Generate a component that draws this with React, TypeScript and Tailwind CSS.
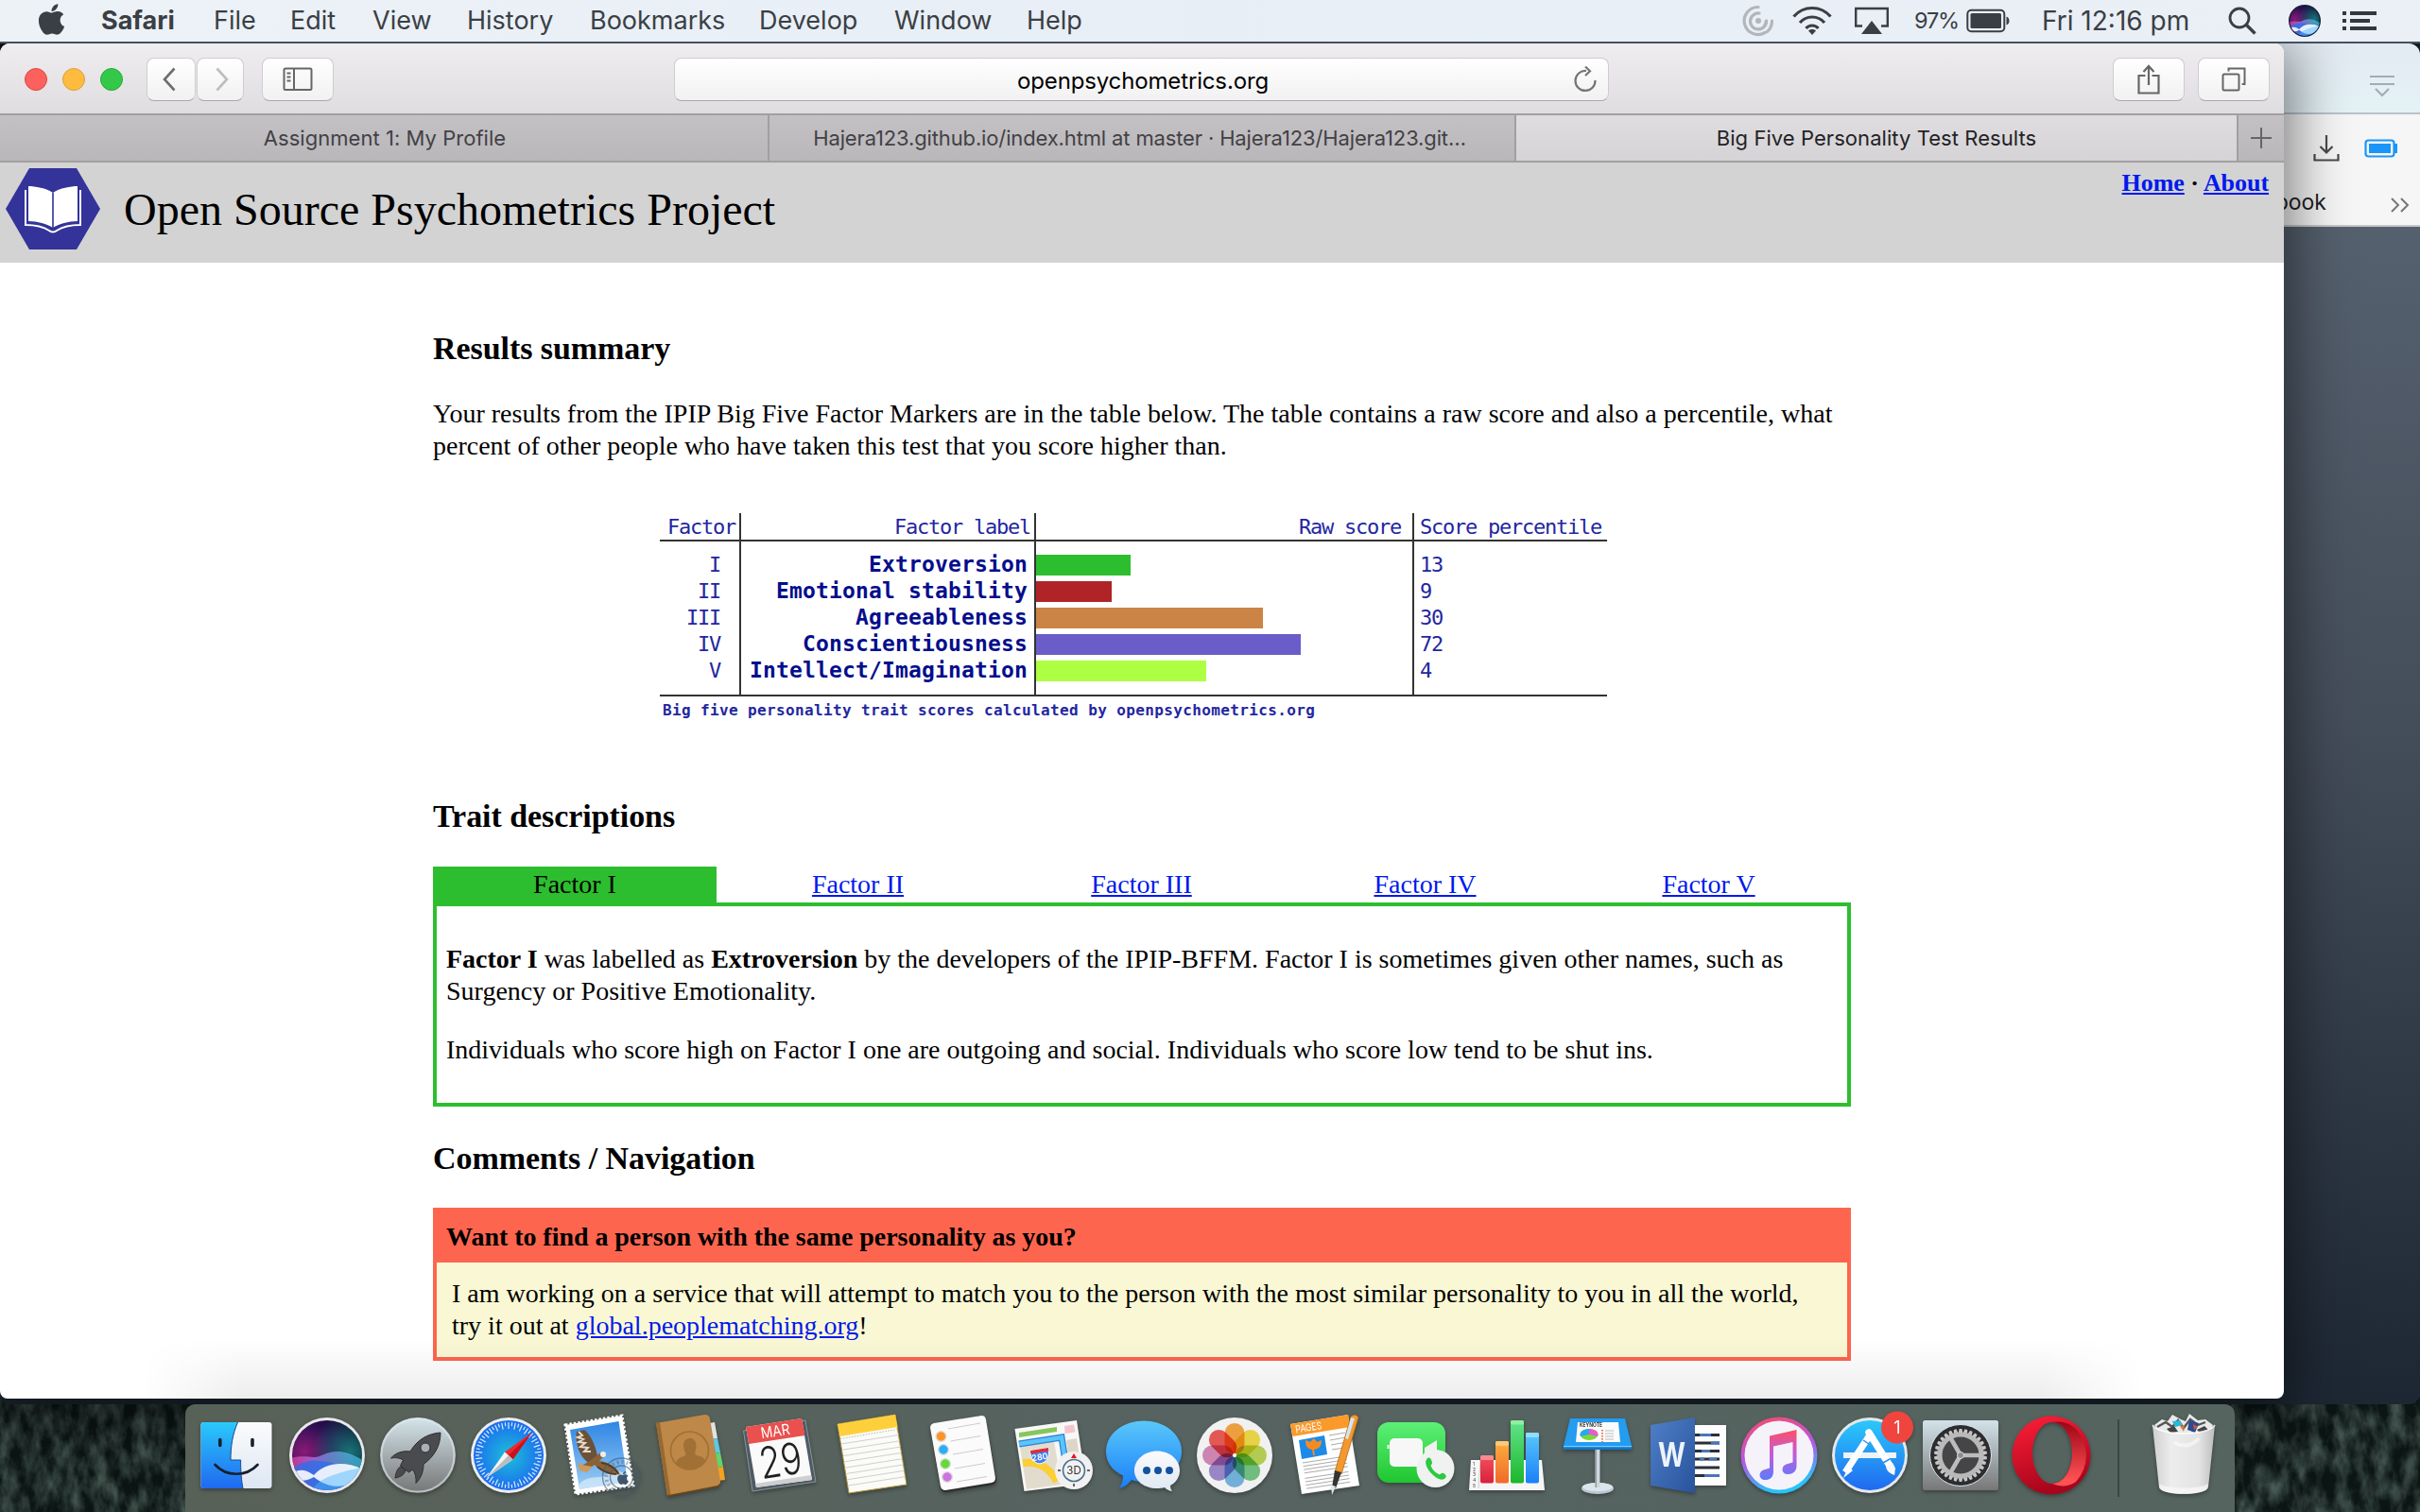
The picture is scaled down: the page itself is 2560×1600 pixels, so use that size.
import React from 'react';
import { FaApple } from 'react-icons/fa';

const SANS = "font-['Inter',sans-serif]";
const SERIF = "font-['Liberation_Serif',serif]";

const menuItems = [
  { label: 'Safari', cls: 'w-[119px] font-bold' },
  { label: 'File', cls: 'w-[81px]' },
  { label: 'Edit', cls: 'w-[87px]' },
  { label: 'View', cls: 'w-[100px]' },
  { label: 'History', cls: 'w-[130px]' },
  { label: 'Bookmarks', cls: 'w-[179px]' },
  { label: 'Develop', cls: 'w-[143px]' },
  { label: 'Window', cls: 'w-[140px]' },
  { label: 'Help', cls: '' },
];

function MenuBar() {
  return (
    <header className={`${SANS} relative z-30 flex h-[46px] items-center border-b-2 border-[#45525f] bg-gradient-to-r from-[#edf2f7] via-[#e7eef6] to-[#ebf0f6] text-[27px] leading-[46px] text-[#3a3f45]`}>
      <FaApple className="mb-1 ml-[36px] h-[37px] w-[37px]" />
      <nav className="ml-[34px] flex">
        {menuItems.map((m) => (
          <span key={m.label} className={m.cls}>{m.label}</span>
        ))}
      </nav>
      <div className="ml-auto flex h-[44px] items-center">
        <svg className="h-[34px] w-[34px]" viewBox="0 0 34 34" fill="none" stroke="#b0b6bc" strokeWidth="3.2" strokeLinecap="round">
          <path d="M17 2.500A14.500 14.500 0 1 0 24 29.500" />
          <path d="M18 9A8.500 8.500 0 1 0 25.500 17" />
          <circle cx="17" cy="17" r="3" fill="#b0b6bc" stroke="none" />
          <path d="M31.500 17c0 5-2 9-5 11.500M25.500 17c0 2-.8 4-2 5.500" />
        </svg>
        <svg className="ml-[19px] h-[32px] w-[42px]" viewBox="0 0 42 32" fill="none" stroke="#3a3f45" strokeWidth="3.2">
          <path d="M1.500 11.500C12-.500 30-.500 40.500 11.500" />
          <path d="M8 18C15 10 27 10 34 18" />
          <path d="M14.500 24C18 20 24 20 27.500 24" />
          <path d="M21 31l-4-4.500c2-2 6-2 8 0z" fill="#3a3f45" stroke="none" />
        </svg>
        <svg className="ml-[23px] h-[30px] w-[38px]" viewBox="0 0 38 30">
          <path d="M9 20.500H2.200V2h33.600v18.500H29" fill="none" stroke="#3a3f45" strokeWidth="2.400" />
          <path d="M19 15l11 14H8z" fill="#3a3f45" />
        </svg>
        <span className="ml-[26px] w-[55px] text-[23.500px] tracking-[-1.2px]">97%</span>
        <svg className="h-[26px] w-[48px]" viewBox="0 0 48 26">
          <rect x="1.300" y="1.800" width="39" height="22.400" rx="4" fill="none" stroke="#3a3f45" strokeWidth="2" />
          <rect x="4.500" y="5" width="32.500" height="16" rx="1.500" fill="#3a3f45" />
          <path d="M42.500 8.500c4 1 4 8 0 9z" fill="#3a3f45" />
        </svg>
        <span className="ml-[32px] w-[160px] text-[28px] whitespace-nowrap">Fri 12:16 pm</span>
        <svg className="ml-[37px] h-[30px] w-[30px]" viewBox="0 0 30 30" fill="none" stroke="#3a3f45" strokeWidth="2.800">
          <circle cx="12" cy="12" r="10" />
          <path d="M19 19l9.500 9.500" strokeWidth="3.400" />
        </svg>
        <svg className="ml-[34px] h-[34px] w-[34px]" viewBox="8 14 80 80"><SiriOrb rim="#1a1d3a" /></svg>
        <svg className="mr-[45px] ml-[22px] h-[22px] w-[38px]" viewBox="0 0 38 22" fill="#33383e">
          <path d="M1 1h4v4H1zM9 1h28v4H9zM1 9h4v4H1zM9 9h21v4H9zM1 17h4v4H1zM9 17h28v4H9z" />
        </svg>
      </div>
    </header>
  );
}

const BTN = 'flex h-[46px] items-center justify-center rounded-[8px] border border-[#cfcdd0] border-b-[#a9a7aa] bg-gradient-to-b from-white to-[#f1f1f1]';

function Toolbar() {
  return (
    <div className="flex h-[74px] items-center bg-gradient-to-b from-[#efedef] to-[#dfdde0] pt-[2px]">
      <span className="ml-[26px] h-[24px] w-[24px] rounded-full border border-[#e0443e] bg-[#fc615d]" />
      <span className="ml-[16px] h-[24px] w-[24px] rounded-full border border-[#de9f34] bg-[#fdbc40]" />
      <span className="ml-[16px] h-[24px] w-[24px] rounded-full border border-[#27aa35] bg-[#34c84a]" />
      <div className={`${BTN} ml-[25px] w-[52px]`}>
        <svg className="mr-1 h-[26px] w-[14px]" viewBox="0 0 14 26" fill="none" stroke="#6e6e6e" strokeWidth="2.600"><path d="M12.500 1.500L2 13l10.500 11.500" /></svg>
      </div>
      <div className={`${BTN} ml-px w-[50px]`}>
        <svg className="ml-1 h-[26px] w-[14px]" viewBox="0 0 14 26" fill="none" stroke="#bdbdbd" strokeWidth="2.600"><path d="M1.500 1.500L12 13 1.500 24.500" /></svg>
      </div>
      <div className={`${BTN} ml-[19px] w-[76px]`}>
        <svg className="h-[26px] w-[32px]" viewBox="0 0 32 26" fill="none" stroke="#666" strokeWidth="2">
          <rect x="1.500" y="1.500" width="29" height="22.500" rx="1.500" />
          <path d="M12 1v23M4.500 6.500h4M4.500 10.500h4M4.500 14.500h4" />
        </svg>
      </div>
      <div className={`${BTN} relative ml-[360px] w-[989px] text-[24px] tracking-[-0.15px] text-black`}>
        <span className="pt-[3px] pl-[3px]">openpsychometrics.org</span>
        <svg className="absolute right-[11px] h-[28px] w-[26px]" viewBox="0 0 26 28" fill="none" stroke="#757575" strokeWidth="2.200">
          <path d="M23.500 15A10.500 10.500 0 1 1 14 5" />
          <path d="M13 .500L18 5.200 13 10" />
        </svg>
      </div>
      <div className={`${BTN} ml-auto w-[76px]`}>
        <svg className="h-[32px] w-[24px]" viewBox="0 0 24 32" fill="none" stroke="#666" strokeWidth="2.200">
          <path d="M8.500 12H1.500v18.500h21V12h-7" />
          <path d="M12 22V3M6.500 8L12 2l5.500 6" />
        </svg>
      </div>
      <div className={`${BTN} mr-[15px] ml-[14px] w-[76px]`}>
        <svg className="h-[26px] w-[26px]" viewBox="0 0 26 26" fill="none" stroke="#666" strokeWidth="2">
          <rect x="1.500" y="7.500" width="17" height="17" rx="1.500" />
          <path d="M7.500 4.500v-3h17V18h-2.800" />
        </svg>
      </div>
    </div>
  );
}

function TabStrip() {
  return (
    <div className="flex h-[52px] border-y-2 border-[#a29fa2] text-[22px] leading-[48px] text-[#434145]">
      <div className="w-[814px] border-r-2 border-[#a29fa2] bg-gradient-to-b from-[#c3c1c4] to-[#b9b7ba] pl-[2px] text-center tracking-[0.04px]">Assignment 1: My Profile</div>
      <div className="w-[790px] border-r-2 border-[#a29fa2] bg-gradient-to-b from-[#c3c1c4] to-[#b9b7ba] pr-[5px] text-center tracking-[-0.14px]">Hajera123.github.io/index.html at master · Hajera123/Hajera123.git…</div>
      <div className="w-[762px] bg-gradient-to-b from-[#dfdde0] to-[#d5d3d6] text-center tracking-[0.06px] text-[#232224]">Big Five Personality Test Results</div>
      <div className="flex flex-1 items-center justify-center border-l-2 border-[#a29fa2] bg-gradient-to-b from-[#c3c1c4] to-[#b9b7ba]">
        <svg className="h-[22px] w-[22px]" viewBox="0 0 22 22" stroke="#666" strokeWidth="2"><path d="M11 0v22M0 11h22" /></svg>
      </div>
    </div>
  );
}

function SiteHeader() {
  return (
    <div className="flex h-[106px] items-start bg-[#d3d3d3]">
      <svg className="mt-[6px] ml-[6px] h-[86px] w-[100px]" viewBox="0 0 100 86">
        <path d="M25 0h50l25 43-25 43H25L0 43z" fill="#333399" />
        <path d="M24 19c7 0 19 2 26 7 7-5 19-7 26-7v37c-9 0-20 3-26 7-6-4-17-7-26-7z" fill="#fff" />
        <path d="M50 26v37" stroke="#333399" strokeWidth="1.600" />
        <path d="M21 23v37c9 0 19 2 25 6 2 2 6 2 8 0 6-4 16-6 25-6V23" fill="none" stroke="#fff" strokeWidth="2" />
      </svg>
      <h1 className="mt-[22px] ml-[25px] text-[48px] leading-[56px]">Open Source Psychometrics Project</h1>
      <div className="mt-[6px] mr-[16px] ml-auto text-[26px] leading-[32px] font-bold tracking-[-0.05px]">
        <a className="text-[#0019ee] underline">Home</a> · <a className="text-[#0019ee] underline">About</a>
      </div>
    </div>
  );
}

const factors = [
  { n: 'I', label: 'Extroversion', bar: 'w-[100px] bg-[#2dbe2f]', pct: '13' },
  { n: 'II', label: 'Emotional stability', bar: 'w-[80px] bg-[#b02427]', pct: '9' },
  { n: 'III', label: 'Agreeableness', bar: 'w-[240px] bg-[#cb8445]', pct: '30' },
  { n: 'IV', label: 'Conscientiousness', bar: 'w-[280px] bg-[#6a5dc9]', pct: '72' },
  { n: 'V', label: 'Intellect/Imagination', bar: 'w-[180px] bg-[#adff43]', pct: '4' },
];

const COLS = 'grid grid-cols-[86px_312px_400px_204px]';
const RULE = 'border-r-2 border-[#333]';

function ScoreTable() {
  return (
    <div className="ml-[240px] w-[1002px] font-['DejaVu_Sans_Mono',monospace] text-[22px] tracking-[-1.24px] text-[#2326a0]">
      <div className={`${COLS} h-[28px] leading-[29px]`}>
        <span className={`${RULE} pr-[4px] text-right`}>Factor</span>
        <span className={`${RULE} pr-[4px] text-right`}>Factor label</span>
        <span className={`${RULE} pr-[12px] text-right`}>Raw score</span>
        <span className="pl-[6px] whitespace-nowrap">Score percentile</span>
      </div>
      <div className="border-y-2 border-[#333]">
        <div className={`${COLS} h-[11px]`}><i className={RULE} /><i className={RULE} /><i className={RULE} /></div>
        {factors.map((f) => (
          <div key={f.n} className={`${COLS} h-[28px] leading-[27px]`}>
            <span className={`${RULE} pr-[20px] text-right`}>{f.n}</span>
            <span className={`${RULE} pr-[7px] text-right text-[23px] leading-[27px] font-bold tracking-[0.15px] whitespace-nowrap text-[#040e8c]`}>{f.label}</span>
            <span className={`${RULE} flex items-center`}><b className={`block h-[22px] ${f.bar}`} /></span>
            <span className="pl-[6px]">{f.pct}</span>
          </div>
        ))}
        <div className={`${COLS} h-[11px]`}><i className={RULE} /><i className={RULE} /><i className={RULE} /></div>
      </div>
      <p className="pl-[3px] text-[16px] leading-[30px] font-bold tracking-[0.37px]">Big five personality trait scores calculated by openpsychometrics.org</p>
    </div>
  );
}

const H2 = 'text-[34px] leading-[40px] font-bold tracking-[-0.06px]';
const LINK = 'text-[#0019ee] underline';

function PageBody() {
  return (
    <main className="ml-[458px] w-[1500px] pt-[71px] text-[28px] leading-[34px] text-black">
      <h2 className={H2}>Results summary</h2>
      <p className="mt-[32px]">
        Your results from the IPIP Big Five Factor Markers are in the table below. The table contains a raw score and also a percentile, what<br />
        percent of other people who have taken this test that you score higher than.
      </p>
      <div className="mt-[54px] h-[301px]"><ScoreTable /></div>
      <h2 className={H2}>Trait descriptions</h2>
      <div className="mt-[33px] grid h-[38px] grid-cols-5 text-center leading-[38px]">
        <span className="bg-[#2dbe2f]">Factor I</span>
        {['Factor II', 'Factor III', 'Factor IV', 'Factor V'].map((f) => (
          <a key={f} className={`${LINK} pr-px`}>{f}</a>
        ))}
      </div>
      <section className="h-[216px] border-4 border-[#2dbe2f] px-[10px] pt-[39px]">
        <p><b>Factor I</b> was labelled as <b>Extroversion</b> by the developers of the IPIP-BFFM. Factor I is sometimes given other names, such as Surgency or Positive Emotionality.</p>
        <p className="mt-[28px]">Individuals who score high on Factor I one are outgoing and social. Individuals who score low tend to be shut ins.</p>
      </section>
      <h2 className={`${H2} mt-[35px]`}>Comments / Navigation</h2>
      <section className="mt-[32px] h-[162px] border-4 border-[#fe654f] bg-[#faf8d4]">
        <h3 className="h-[54px] bg-[#fe654f] pt-[10px] pl-[10px] font-bold tracking-[-0.04px]">Want to find a person with the same personality as you?</h3>
        <p className="pt-[16px] pl-[16px]">
          I am working on a service that will attempt to match you to the person with the most similar personality to you in all the world,<br />
          try it out at <a className={LINK}>global.peoplematching.org</a>!
        </p>
      </section>
    </main>
  );
}

function BackWindow() {
  return (
    <div className={`${SANS} absolute top-[46px] left-0 h-[1440px] w-[2560px] overflow-hidden rounded-[12px] bg-gradient-to-b from-[#5c6876] via-[#444d5a] to-[#1d2734]`}>
      <div className="flex h-[75px] items-center justify-end border-b-2 border-[#b9c3cb] bg-gradient-to-b from-[#e3eaf2] to-[#e4f2f6] pr-[27px]">
        <svg className="mt-4 h-[24px] w-[26px]" viewBox="0 0 26 24" fill="none" stroke="#a3acb4" strokeWidth="2.200"><path d="M0 2h26M0 10h26M6 15l7 7 7-7" /></svg>
      </div>
      <div className="flex h-[119px] flex-col border-b-2 border-[#c8c8c8] bg-[#f6f6f6]">
        <div className="flex h-[72px] items-center justify-end pr-[23px]">
          <svg className="mr-px h-[28px] w-[28px]" viewBox="0 0 28 28" fill="none" stroke="#4a4a4a" strokeWidth="2.200"><path d="M14 0v18M7.500 12l6.500 6.500 6.500-6.500M1.500 20v6.500h25V20" /></svg>
          <svg className="ml-[25px] h-[20px] w-[36px]" viewBox="0 0 36 20">
            <rect x="1.500" y="1.500" width="30" height="17" rx="3" fill="none" stroke="#1b95f8" strokeWidth="2.200" />
            <rect x="5" y="5" width="23" height="10" fill="#1b95f8" /><path d="M32 5h3v10h-3z" fill="#1b95f8" />
          </svg>
        </div>
        <div className="flex items-center justify-end pr-[11px] text-[23px] leading-[43px] text-[#222]">
          <span className="w-[135px] text-right">Facebook</span>
          <svg className="mt-1 ml-[68px] h-[16px] w-[20px]" viewBox="0 0 20 16" fill="none" stroke="#777" strokeWidth="2"><path d="M1 1l7 7-7 7M11 1l7 7-7 7" /></svg>
        </div>
      </div>
    </div>
  );
}

function Forest() {
  return (
    <svg className="absolute bottom-0 left-0 h-[130px] w-[2560px]" viewBox="0 0 2560 130">
      <defs>
        <filter id="foliage" x="0" y="0" width="1" height="1">
          <feTurbulence type="fractalNoise" baseFrequency=".07 .035" numOctaves="5" seed="7" />
          <feColorMatrix values="0 0 0 0 .14  0 0 0 0 .21  0 0 0 0 .18  1.2 0 0 0 -.38" />
        </filter>
      </defs>
      <path d="M0 0h200v130H0zM2360 0h200v130h-200z" fill="#0b1514" />
      <rect width="200" height="130" filter="url(#foliage)" />
      <rect x="2360" width="200" height="130" filter="url(#foliage)" />
    </svg>
  );
}

function SiriOrb({ rim = '#e8e8ec' }: { rim?: string }) {
  return (
    <>
      <defs>
        <radialGradient id="siriA" cx=".2" cy=".45" r=".75"><stop offset="0" stopColor="#8a1a78" /><stop offset=".5" stopColor="#2a1050" /><stop offset="1" stopColor="#0a0a28" /></radialGradient>
        <linearGradient id="siriB" x2="1"><stop offset="0" stopColor="#ff3fa0" /><stop offset=".35" stopColor="#a98cff" /><stop offset="1" stopColor="#37d0e8" /></linearGradient>
        <radialGradient id="siriC" cx=".8" cy=".45" r=".5"><stop offset="0" stopColor="#188c84" stopOpacity=".8" /><stop offset="1" stopColor="#188c84" stopOpacity="0" /></radialGradient>
        <clipPath id="siriClip"><circle cx="48" cy="54" r="37" /></clipPath>
      </defs>
      <circle cx="48" cy="54" r="40" fill={rim} />
      <g clipPath="url(#siriClip)">
        <path d="M8 14h80v80H8z" fill="url(#siriA)" />
        <path d="M8 14h80v80H8z" fill="url(#siriC)" />
        <path d="M8 58c14-6 24 0 32-3s22-12 48 6v37H8z" fill="url(#siriB)" opacity=".65" />
        <path d="M8 70c22-16 40-12 80 4v24H8z" fill="#2d6fe8" opacity=".8" />
        <path d="M8 76c8-8 16-8 26-1 12-14 34-16 54-5-12 20-36 22-54 7-8 5-18 5-26-1z" fill="#fff" opacity=".88" />
        <path d="M28 96c10-18 24-22 60-30v30z" fill="#48b8ff" opacity=".45" />
      </g>
    </>
  );
}

function Icon({ children }: { children: React.ReactNode }) {
  return <svg className="h-[114px] w-[96px] shrink-0 overflow-visible drop-shadow-[0_2px_2px_rgba(0,0,0,0.35)]" viewBox="0 0 96 114">{children}</svg>;
}

const ticks = Array.from({ length: 60 }, (_, i) => i * 6);
const teeth = Array.from({ length: 30 }, (_, i) => i * 12);
const petals = [
  [0, '#f9a130'], [45, '#f3dd3a'], [90, '#b8d548'], [135, '#6cc37c'],
  [180, '#6cb3e2'], [225, '#9a84cc'], [270, '#d583b4'], [315, '#ee4f4c'],
] as [number, string][];

function Dock() {
  return (
    <div className={`${SANS} absolute bottom-0 left-[196px] z-40 flex h-[114px] w-[2168px] rounded-t-[10px] bg-gradient-to-r from-[#586157] via-[#566361] to-[#55645f] pl-[6px]`}>
      <svg className="absolute h-0 w-0">
        <defs>
          <linearGradient id="gBlue" x2="0" y2="1"><stop offset="0" stopColor="#2ac9fb" /><stop offset="1" stopColor="#2069f0" /></linearGradient>
          <linearGradient id="gBubble" x2="0" y2="1"><stop offset="0" stopColor="#5ac8fb" /><stop offset="1" stopColor="#1a80f8" /></linearGradient>
          <linearGradient id="gPale" x2="0" y2="1"><stop offset="0" stopColor="#fbfbfc" /><stop offset="1" stopColor="#dde7f3" /></linearGradient>
          <linearGradient id="gSteel" x2="0" y2="1"><stop offset="0" stopColor="#d3e3e9" /><stop offset="1" stopColor="#777" /></linearGradient>
          <radialGradient id="gSafari"><stop offset="0" stopColor="#1cc0d8" /><stop offset="1" stopColor="#1c6cf0" /></radialGradient>
          <linearGradient id="gSky" x2="0" y2="1"><stop offset="0" stopColor="#2e86e4" /><stop offset="1" stopColor="#9ccdf5" /></linearGradient>
          <linearGradient id="gGreen" x2="0" y2="1"><stop offset="0" stopColor="#5df077" /><stop offset="1" stopColor="#1fc62f" /></linearGradient>
          <linearGradient id="gGreenBar" x2="0" y2="1"><stop offset="0" stopColor="#62e48c" /><stop offset="1" stopColor="#1cb62c" /></linearGradient>
          <linearGradient id="gRed" x2="0" y2="1"><stop offset="0" stopColor="#f2525c" /><stop offset="1" stopColor="#d8203c" /></linearGradient>
          <linearGradient id="gOrange" x2="0" y2="1"><stop offset="0" stopColor="#fbb040" /><stop offset="1" stopColor="#f0692a" /></linearGradient>
          <linearGradient id="gWord" x2="1" y2="1"><stop offset="0" stopColor="#4f80c8" /><stop offset="1" stopColor="#28539c" /></linearGradient>
          <linearGradient id="gTunes" x2=".3" y2="1"><stop offset="0" stopColor="#ff4a5c" /><stop offset=".55" stopColor="#b456e8" /><stop offset="1" stopColor="#28c4fb" /></linearGradient>
          <linearGradient id="gNote" x2="0" y2="1"><stop offset="0" stopColor="#fb5064" /><stop offset=".5" stopColor="#c15be0" /><stop offset="1" stopColor="#5a7cfa" /></linearGradient>
          <linearGradient id="gOpera" x2=".3" y2="1"><stop offset="0" stopColor="#ff1f38" /><stop offset="1" stopColor="#a8051c" /></linearGradient>
          <linearGradient id="gOperaR" x2="0" y2="1"><stop offset="0" stopColor="#9c0614" /><stop offset=".9" stopColor="#ff5054" /></linearGradient>
          <linearGradient id="gTrash" x2="1"><stop offset="0" stopColor="#cfcfd0" /><stop offset=".3" stopColor="#ededee" /><stop offset=".75" stopColor="#e3e3e4" /><stop offset="1" stopColor="#bdbdbf" /></linearGradient>
        </defs>
      </svg>

      {/* Finder */}
      <Icon>
        <rect x="10.500" y="19" width="75" height="70" rx="3" fill="url(#gPale)" />
        <path d="M49.500 19C44 32 42 44 42 59h10.600c0 12 .8 22 2.400 30H13.500a3 3 0 0 1-3-3V22a3 3 0 0 1 3-3z" fill="url(#gBlue)" />
        <path d="M49.500 19C44 32 42 44 42 59h10.600c0 12 .8 22 2.400 30" fill="none" stroke="#164a8c" strokeWidth="1" />
        <path d="M30.800 37.500v6M65 37.500v6" stroke="#16202c" strokeWidth="3.600" strokeLinecap="round" />
        <path d="M25.500 64c12 13 33 13 45 0" fill="none" stroke="#16202c" strokeWidth="2.600" strokeLinecap="round" />
      </Icon>
      {/* Siri */}
      <Icon><SiriOrb /></Icon>
      {/* Launchpad */}
      <Icon>
        <circle cx="48" cy="54" r="40" fill="url(#gSteel)" />
        <circle cx="48" cy="54" r="38.500" fill="url(#gSteel)" stroke="#dfeaf0" strokeWidth="2" strokeOpacity=".6" />
        <path d="M72 30c-14 1-25 8-32 20-8-1-15 1-20.500 7 6-1 10 0 13 2l-3 6 9 7 4-3c3 4 4 9 3.500 14.500 5-5 8-12 8-20 11-8 18-19 18-33.500z" fill="#494b4e" stroke="#2e2f31" strokeWidth="1" />
        <path d="M24 78c1-7 3-11 6-12l5 4c-1 4-5 7-11 8z" fill="#494b4e" stroke="#2e2f31" />
        <circle cx="56" cy="46" r="5" fill="#a9b1b5" stroke="#2e2f31" />
      </Icon>
      {/* Safari */}
      <Icon>
        <circle cx="48" cy="54" r="40" fill="#eceef0" />
        <circle cx="48" cy="54" r="37" fill="url(#gSafari)" />
        {ticks.map((a) => (
          <path key={a} d={a % 12 ? 'M48 19v4' : 'M48 19v7'} stroke="#d9ecfb" strokeWidth="1.200" transform={`rotate(${a} 48 54)`} />
        ))}
        <path d="M72.700 30L44 50.500l8.500 8z" fill="#f0282d" />
        <path d="M72.700 30L48 54l4.500 4.500z" fill="#c8121c" />
        <path d="M24.500 78L44 50.500l8.500 8z" fill="#f4f4f4" />
        <path d="M24.500 78L48 54l4.500 4.500z" fill="#b9bdc2" />
      </Icon>
      {/* Mail */}
      <Icon>
        <path d="M12 22L72 12l12 74-61 9z" fill="#fff" stroke="#fff" strokeWidth="3" strokeDasharray="2.500 2" />
        <path d="M17 27l51.500-9L78 82l-51 8z" fill="url(#gSky)" />
        <path d="M27 84c10-10 20-4 30-10s14-2 20 0l1 8-51 8z" fill="#dcedf9" opacity=".7" />
        <path d="M24 29c-2 14 4 28 14 34l8-8c-2-12-8-24-14-28z" fill="#6b5138" />
        <path d="M26 29l4 4-5 2 6 2-5 3 7 1-5 4 8 1-4 4 7 0" fill="none" stroke="#e8dccb" strokeWidth="2" />
        <path d="M48 52l6 2-6 6c10 1 18 6 22 14-10 2-21-2-27-10l-10 7-4-6c6-3 13-8 19-13z" fill="#8a6238" />
        <path d="M50 62c8 1 14 5 18 11M46 66c6 5 12 8 20 8" fill="none" stroke="#4b3522" strokeWidth="1.500" />
        <path d="M29 64l-4-3 2 9 8 2 6-6z" fill="#cf9a5a" />
        <circle cx="52" cy="53" r="3" fill="#f3ece0" />
        <g fill="none" stroke="#3f556b" strokeOpacity=".6" strokeWidth="1.400">
          <circle cx="71.500" cy="77" r="20" /><circle cx="71.500" cy="77" r="12" />
          <circle cx="71.500" cy="77" r="16" strokeWidth="4" strokeDasharray="2 3" strokeOpacity=".4" />
        </g>
        <FaApple x="65" y="70" width="13" height="13" color="#3f556b" />
      </Icon>
      {/* Contacts */}
      <Icon>
        <path d="M68 20l6-1 3 17-6 1z" fill="#e2e2e2" /><path d="M71 37l6-1 3 15-6 1z" fill="#5ec8e8" />
        <path d="M74 52l6-1 3 15-6 1z" fill="#63d46a" /><path d="M76 67l7-1 2 14-8 1z" fill="#f5a31f" />
        <path d="M12 20l51-9q5-.5 6 4l11 66q.5 5-4 6L24 97z" fill="#bd8848" />
        <path d="M12 20l4-1 11.500 77L24 97z" fill="#99692f" />
        <path d="M24 97l52-10q3-.5 4-3" fill="none" stroke="#6d4718" strokeWidth="1.600" />
        <circle cx="47.500" cy="49" r="20" fill="none" stroke="#a07034" strokeWidth="1.600" />
        <path d="M33 62c2-6 7-6 10-8 1-2 0-3-1-5-3-10 2-13 6-13s8 4 6 12c-1 3-1 4 0 6 4 1 9 1 10 6a20 20 0 0 1-31 2z" fill="#a07034" />
      </Icon>
      {/* Calendar */}
      <Icon>
        <path d="M8.500 28L74 17l11 65-67 10z" fill="#4e5b66" stroke="#8b969e" strokeWidth="1" />
        <path d="M11 24l59-9 11 65-59 8z" fill="#fafafa" /><path d="M21 84l59-9 1 5-59 8z" fill="#cfcfcf" />
        <path d="M11 24l59-9 3.500 18L14 42z" fill="#e9504e" />
        <g transform="rotate(-9 42 28)"><text x="42" y="34" fontSize="16" fill="#fff" textAnchor="middle" textLength="31" lengthAdjust="spacingAndGlyphs">MAR</text></g>
        <g transform="rotate(-9 47 59)"><text x="25" y="76" fontSize="46" fontWeight="300" fill="#1f1f1f" textLength="45" lengthAdjust="spacingAndGlyphs">29</text></g>
      </Icon>
      {/* Notes */}
      <Icon>
        <path d="M12 21l61-10 12 74-61 9z" fill="#fbfbf8" stroke="#b39335" strokeWidth="1" />
        <path d="M12 21l61-10 2.500 13-60.800 10z" fill="#fdd03b" />
        <path d="M15 36.500l60.500-10" stroke="#bba" strokeWidth="1" strokeDasharray="1.500 1.500" />
        {[0, 1, 2, 3, 4, 5, 6, 7].map((i) => (
          <path key={i} d="M16 42l60.500-9.500" stroke="#cfcfcf" strokeWidth="1" transform={`translate(${i} ${i * 6.3})`} />
        ))}
      </Icon>
      {/* Reminders */}
      <Icon>
        <path d="M14 26q0-4 4-5l50-9q4 0 5 4l11 63q0 5-4 6l-49 8q-5 0-6-4z" fill="#2b2b2b" />
        <path d="M14 25q0-4 4-5l50-8q4-.5 5 4l10 62q0 4-4 5l-49 8q-4 0-5-4z" fill="#fbfbfb" />
        {[['#fd9427', 25.5, 34], ['#2aaef5', 28, 48], ['#63da38', 30, 63], ['#cc73e1', 32, 77]].map(([c, x, y]) => (
          <g key={c}><circle cx={x} cy={y} r="5.400" fill={String(c)} stroke="#ddd" strokeWidth="1.400" /><path d={`M${Number(x) + 10} ${Number(y) + 5}l32-5.500`} stroke="#ccc" strokeWidth="1" /></g>
        ))}
        <path d="M33 26l34-6" stroke="#ccc" />
      </Icon>
      {/* Maps */}
      <Icon>
        <path d="M7.500 26L73 17l10 67-65.500 8z" fill="#f8f8f6" />
        <path d="M12 35l40-6v-5l-40 6z" fill="#86c65c" /><path d="M60 23l10-1.500 1.500 8-11 1.500z" fill="#f3c6ce" />
        <path d="M13 45l36-6 8 46-37 5z" fill="#e2dcce" />
        <path d="M62 38l11-2 4 26-12 2z" fill="#ddd6c8" />
        <path d="M12 42l45-7 6 38" fill="none" stroke="#2a83d6" strokeWidth="7" /><path d="M12 42l45-7 6 38" fill="none" stroke="#5cc4fb" strokeWidth="4.500" />
        <path d="M16 62c16-2 28 4 36 20" fill="none" stroke="#fbcf35" strokeWidth="8" />
        <path d="M24 49l19-3c2 10-1 15-9 17-7-1-10-6-10-14z" fill="#3f7ff0" stroke="#fff" />
        <path d="M24 49l19-3 .3 3.500-19 3z" fill="#e02c35" />
        <text x="34" y="59" fontSize="9" fontWeight="600" fill="#fff" textAnchor="middle" transform="rotate(-8 34 56)">280</text>
        <circle cx="70" cy="70" r="20" fill="#f1f1f2" /><circle cx="70" cy="70" r="11.500" fill="none" stroke="#48708c" strokeWidth="1.600" />
        <text x="70" y="74" fontSize="11.500" fill="#333" textAnchor="middle">3D</text>
        <path d="M70 52l3 5h-6z" fill="#e5161c" /><path d="M53 70h3M84 70h3M70 84v3" stroke="#333" strokeWidth="1.500" />
      </Icon>
      {/* Messages */}
      <Icon>
        <path d="M48 17.500c22 0 40 14 40 32.500S70 82 48 82c-5 0-9-.5-13-2-4 5-8 8-13 8.500 3-4 4-8 4-13C14 70 8 61 8 50c0-18.500 18-32.500 40-32.500z" fill="url(#gBubble)" />
        <path d="M62 49.500c13.500 0 24 9 24 20.500 0 7-4 13-10 16 0 3 1 5 2 6-4-.5-6-2-8-4-2.500.7-5 1-8 1-13.500 0-24-8-24-19s10.500-20.500 24-20.500z" fill="url(#gPale)" />
        <circle cx="51" cy="70" r="4" fill="#13529e" /><circle cx="63" cy="70" r="4" fill="#13529e" /><circle cx="75" cy="70" r="4" fill="#13529e" />
      </Icon>
      {/* Photos */}
      <Icon>
        <circle cx="48" cy="54" r="40" fill="#f1f1f1" />
        {petals.map(([a, c]) => (
          <rect key={a} x="37.500" y="20" width="21" height="33" rx="10.500" fill={c} className="mix-blend-multiply" opacity=".92" transform={`rotate(${a} 48 54)`} />
        ))}
        <circle cx="48" cy="54" r="2" fill="#fff" />
      </Icon>
      {/* Pages */}
      <Icon>
        <path d="M11 21l61-10 12 75-61 9z" fill="#fff" /><path d="M11 21l61-10 2.500 13L13.500 34z" fill="#fb9a2b" />
        <text x="17" y="30.500" fontSize="11" fill="#fff" transform="rotate(-9 17 30)" textLength="28" lengthAdjust="spacingAndGlyphs">PAGES</text>
        <path d="M20 38l27-5 3 20-27 5z" fill="#1c8ae8" />
        <path d="M35 54l-1-6c-6-1-7-5-7-10l5 2 4-4 3 4 5-2c0 6-2 9-8 10l1 6z" fill="#f58b1f" />
        {[0, 1, 2, 3, 4, 5, 6, 7].map((i) => (
          <path key={i} d="M24 62l46-7" stroke="#aaa" strokeWidth="1" transform={`translate(${i * 0.6} ${i * 3.6 - (i > 3 ? -2 : 0)})`} />
        ))}
        <path d="M52 33l17-3M53 38l17-3M54 43l17-3M55 48l14-2" stroke="#aaa" />
        <path d="M75 13q5-4 8 1L65 74l-7-2z" fill="#f3982f" stroke="#b76514" strokeWidth=".8" /><path d="M75 14l-6 22 3 1 7-22z" fill="#cfe5f5" />
        <path d="M58 70l7 2-6 17-4-1z" fill="#333" /><path d="M54 85l5 2-4 9z" fill="#dfe6ec" />
      </Icon>
      {/* FaceTime */}
      <Icon>
        <rect x="7" y="19" width="72" height="64" rx="12" fill="url(#gGreen)" />
        <rect x="20" y="36" width="35" height="30" rx="5" fill="#f7f7f7" /><path d="M57 46l13-8v25l-13-8z" fill="#f0f0f0" /><path d="M17.500 43h2v4h-2z" fill="#fff" />
        <circle cx="68.500" cy="68" r="20" fill="#f0f1f1" />
        <path d="M60 57c3-2 5 3 5 5s-2 2-1 4c2 4 4 6 8 8 2 1 2-2 5-1 2 1 4 3 2 5-3 3-8 2-14-4s-9-13-5-17z" fill="#2ec940" />
      </Icon>
      {/* Numbers */}
      <Icon>
        <path d="M10 59h75l3 32H8z" fill="#f6f6f6" /><path d="M20 59l-2 30" stroke="#ccc" />
        {['1', '2', '3', '4', '5'].map((n, i) => <text key={n} x="12" y={65 + i * 5.7} fontSize="5" fill="#444">{n}</text>)}
        <rect x="20" y="54" width="14" height="29.500" rx="2" fill="url(#gRed)" /><rect x="20" y="54" width="14" height="5" rx="1.500" fill="#f98a8e" />
        <rect x="36" y="39" width="14" height="44.500" rx="2" fill="url(#gOrange)" /><rect x="36" y="39" width="14" height="5" rx="1.500" fill="#fdc877" />
        <rect x="52" y="17" width="14" height="66.500" rx="2" fill="url(#gGreenBar)" /><rect x="52" y="17" width="14" height="4.500" rx="1.500" fill="#8ff0a0" />
        <rect x="68" y="30" width="14" height="53.500" rx="2" fill="url(#gBubble)" /><rect x="68" y="30" width="14" height="5" rx="1.500" fill="#8fdcff" />
      </Icon>
      {/* Keynote */}
      <Icon>
        <ellipse cx="48" cy="89" rx="17" ry="6" fill="#b9c8d4" /><ellipse cx="48" cy="87.500" rx="16" ry="4.500" fill="#dce5ec" />
        <path d="M45.500 46h5v42h-5z" fill="#cfd6dc" /><path d="M45.500 46h1.500v42h-1.500z" fill="#8f9aa3" />
        <path d="M19 15h58l7 29H12z" fill="#249cf0" /><path d="M12 44h72v4H12z" fill="#1474c4" /><path d="M12 44h72v1.300H12z" fill="#6fd0ff" />
        <path d="M27 19h43l2 21H25z" fill="#fbfbfb" />
        <text x="29" y="24" fontSize="5.500" fontWeight="700" fill="#333" textLength="24" lengthAdjust="spacingAndGlyphs">KEYNOTE</text>
        <ellipse cx="39" cy="32" rx="9.500" ry="6" fill="#78d83c" /><path d="M39 32v-6a9.500 6 0 0 0-9 8z" fill="#29a7f0" /><path d="M39 32v-6a9.500 6 0 0 1 9 8z" fill="#e85ac8" />
        <path d="M53 27v13" stroke="#e97a4a" strokeWidth="2" strokeDasharray="1.500 1.500" /><path d="M56 28h9M56 31h9M56 34h9M56 37h9" stroke="#bbb" />
      </Icon>
      {/* Word */}
      <Icon>
        <path d="M53 22h35v64H53z" fill="#fdfdfd" />
        <path d="M55 32.500h26M55 41h26M55 49.500h26M55 58h26M55 67h26M55 75.500h26" stroke="#2b2f36" strokeWidth="3" />
        <path d="M60 32.500h12M72 41h9M62 49.500h9M60 58h5M70 58h8M65 75.500h16" stroke="#4a76b8" strokeWidth="3" />
        <path d="M8 22l47-8v80L8 86z" fill="url(#gWord)" />
        <text x="16" y="66" fontSize="36" fontWeight="700" fill="#eef4fc" textLength="29" lengthAdjust="spacingAndGlyphs">W</text>
      </Icon>
      {/* iTunes */}
      <Icon>
        <circle cx="48" cy="54" r="40.500" fill="url(#gTunes)" /><circle cx="48" cy="54" r="36.500" fill="#f5f3f9" />
        <path d="M38 33.500L66.500 27v38c0 6-4 9-9 9-7 0-8-8-2-10.500l7-2V40L42 44.500v27c0 6-4 8.500-8.500 8.500-7 0-8-8-2-10.500l6.500-2z" fill="url(#gNote)" />
      </Icon>
      {/* App Store */}
      <Icon>
        <circle cx="48" cy="54" r="40" fill="#e6e8ea" /><circle cx="48" cy="54" r="37" fill="url(#gBlue)" />
        <path d="M20 51h56v6H20z" fill="#eef3f8" />
        <path d="M49 31l-27 41" stroke="#fff" strokeWidth="7" /><path d="M25 66l-5 12 10-8z" fill="#fff" />
        <path d="M47 30l24 38" stroke="#fff" strokeWidth="7.500" strokeLinecap="round" /><path d="M65 66l7-4c3 5 3 9 2 13-5-2-8-4-9-9z" fill="#f4f6f8" />
        <path d="M41 38l6 4M62 62l7-4" stroke="#2a8cf5" strokeWidth="1.500" />
        <circle cx="77" cy="24.500" r="17" fill="#f0453f" /><text x="77" y="31" fontSize="18" fill="#fff" textAnchor="middle">1</text>
      </Icon>
      {/* System Preferences */}
      <Icon>
        <rect x="8" y="17" width="80" height="74" rx="2.500" fill="url(#gSteel)" />
        <circle cx="48" cy="54" r="32.500" fill="#2d2d2f" stroke="#dbe7ee" strokeWidth="1" />
        {teeth.map((a) => <path key={a} d="M46.600 26h2.800l.8 4h-4.400z" fill="#c6c6c6" transform={`rotate(${a} 48 54)`} />)}
        <circle cx="48" cy="54" r="22" fill="#454547" stroke="#b9b9b9" strokeWidth="5" />
        <path d="M48 54h22M48 54L37 35M48 54L37 73" stroke="#bcbcbc" strokeWidth="4.500" />
        <circle cx="48" cy="54" r="3.500" fill="#8d8d8d" stroke="#ddd" />
      </Icon>
      {/* Opera */}
      <Icon>
        <path fillRule="evenodd" d="M48 12.500a41.500 41.500 0 1 0 .01 0zM49 19a21 32.500 0 1 1-.01 0z" fill="url(#gOpera)" />
        <path d="M49 19c10-2 18 1 25 7a41.500 41.500 0 0 1 0 56c-7 5-16 6-25 2 12 0 21-14.500 21-32.500S61 19 49 19z" fill="url(#gOperaR)" />
      </Icon>
      <span className="mt-[16px] ml-[22px] h-[82px] w-[2px] bg-[#3a4745]" />
      {/* Trash */}
      <svg className="ml-[20px] h-[114px] w-[96px] drop-shadow-[0_2px_2px_rgba(0,0,0,0.35)]" viewBox="0 0 96 114">
        <path d="M17 22l8-6 6 2 5-7 9 5 5 2 4-8 9 7 8-1 8 6-4 10H22z" fill="#e9e9ea" />
        <path d="M20 24l9-5 7 5 6-7 6 8 7-9 8 6 8-3" fill="none" stroke="#555" strokeWidth="2.400" />
        <path d="M30 26l8-3 4 6-8 1zM62 27l8-4 4 4-8 4z" fill="#444" />
        <path d="M36 18l8-1 3 5-8 2z" fill="#29b8d8" /><path d="M54 17l10 3-4 10-8-3z" fill="#2b4a90" /><path d="M44 23l5-1-1 7z" fill="#e2762e" /><path d="M58 21l5 3-4 3z" fill="#d8542e" />
        <path d="M15 22c8 12 58 12 66 0l-7 66c-2 9-50 9-52 0z" fill="url(#gTrash)" />
        <path d="M15 22c8 12 58 12 66 0" fill="none" stroke="#fff" strokeWidth="1.600" opacity=".8" />
        <path d="M38 40c8 6 20 4 26-4" fill="none" stroke="#fff" strokeWidth="4" opacity=".5" />
        <path d="M22 84c8 6 44 6 52 0l-1 5c-4 8-46 8-50 0z" fill="#fafafa" opacity=".7" />
      </svg>
    </div>
  );
}

export default function App() {
  return (
    <div className="relative h-[1600px] w-[2560px] overflow-hidden bg-gradient-to-r from-[#0b1311] via-[#101816] to-[#0f1d1c]">
      <Forest />
      <BackWindow />
      <MenuBar />
      <div className={`${SERIF} relative z-20 h-[1434px] w-[2416px] overflow-hidden rounded-t-[10px] rounded-b-[8px] bg-white`}>
        <div className={SANS}>
          <Toolbar />
          <TabStrip />
        </div>
        <SiteHeader />
        <PageBody />
        <div className="pointer-events-none absolute inset-x-[150px] bottom-0 h-[64px] bg-gradient-to-b from-transparent to-black/7 [mask-image:linear-gradient(to_right,transparent,black_5%,black_95%,transparent)]" />
      </div>
      <div className="absolute top-[46px] left-0 z-10 h-[1434px] w-[2416px] rounded-[10px] shadow-[0_12px_60px_10px_rgba(0,0,0,0.5)]" />
      <Dock />
    </div>
  );
}
